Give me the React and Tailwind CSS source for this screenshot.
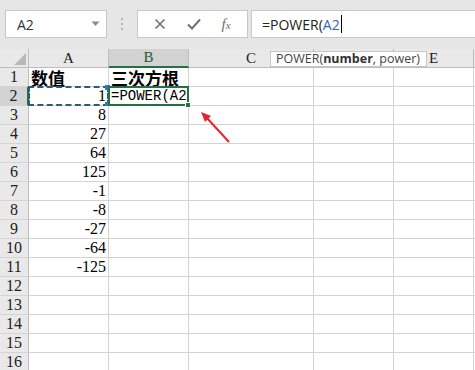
import React from "react";

const cols = [
  { key: "A", w: "w-[80px]" },
  { key: "B", w: "w-[80px]" },
  { key: "C", w: "w-[125px]" },
  { key: "D", w: "w-[80px]" },
  { key: "E", w: "w-[80px]" },
  { key: "F", w: "w-[20px]" },
];

const values = ["数值", "1", "8", "27", "64", "125", "-1", "-8", "-27", "-64", "-125"];

const serif = { fontFamily: '"Liberation Serif", "Noto Sans CJK SC", serif' };

function Toolbar() {
  return (
    <div className="h-[49px] flex items-start pt-[10px] pl-[5px] bg-[#e6e6e6]">
      {/* name box */}
      <div className="w-[102px] h-[28px] bg-white border border-[#c8c8c8] flex items-center justify-between pl-[11px] pr-[6px]">
        <span className="text-[14px] text-[#333]" style={{ fontFamily: '"Open Sans", "Noto Sans", sans-serif' }}>A2</span>
        <svg width="9" height="6" viewBox="0 0 9 6">
          <path d="M0.5 0.5 L8.5 0.5 L4.5 5 Z" fill="#8a8a8a" />
        </svg>
      </div>
      {/* dots */}
      <div className="w-[30px] h-[28px] flex flex-col items-center justify-center gap-[3px]">
        <div className="w-[2px] h-[2px] bg-[#b5b5b5]" />
        <div className="w-[2px] h-[2px] bg-[#b5b5b5]" />
        <div className="w-[2px] h-[2px] bg-[#b5b5b5]" />
      </div>
      {/* x check fx */}
      <div className="w-[111px] h-[28px] bg-white border border-[#c8c8c8] flex items-center justify-around px-[6px]">
        <svg width="12" height="12" viewBox="0 0 12 12">
          <path d="M1.5 1.5 L10.5 10.5 M10.5 1.5 L1.5 10.5" stroke="#6f6f6f" strokeWidth="1.6" />
        </svg>
        <svg width="14" height="12" viewBox="0 0 14 12">
          <path d="M1 6.5 L5 10.5 L13 1.5" stroke="#6f6f6f" strokeWidth="2" fill="none" />
        </svg>
        <span className="text-[15px] italic text-[#6f6f6f] leading-none" style={{ fontFamily: '"Liberation Serif", serif' }}>
          f<span className="text-[11px]">x</span>
        </span>
      </div>
      {/* formula input */}
      <div className="ml-[3px] flex-1 h-[28px] bg-white border border-[#c8c8c8] border-r-0 flex items-center pl-[10px]">
        <span className="text-[14px] text-[#222]" style={{ fontFamily: '"Open Sans", "Noto Sans", sans-serif' }}>
          =POWER(<span className="text-[#3465b5]">A2</span>
        </span>
        <div className="w-[1px] h-[18px] bg-black ml-[1px]" />
      </div>
    </div>
  );
}

function HeaderRow() {
  return (
    <div className="flex h-[19px]">
      <div className="w-[29px] shrink-0 bg-[#e9e9e9] border-r border-b border-[#bdbdbd] relative">
        <svg className="absolute right-[2px] bottom-[2px]" width="12" height="12" viewBox="0 0 12 12">
          <path d="M12 0 L12 12 L0 12 Z" fill="#b8b8b8" />
        </svg>
      </div>
      {cols.map((c) => {
        const sel = c.key === "B";
        return (
          <div
            key={c.key}
            className={`${c.w} shrink-0 flex items-center justify-center text-[15px] border-r ${
              sel
                ? "bg-[#d3d3d3] border-b-2 border-b-[#217346] border-r-[#bdbdbd] text-[#1e5a36]"
                : "bg-[#e9e9e9] border-b border-[#bdbdbd] text-[#222]"
            }`}
            style={serif}
          >
            {c.key === "D" || c.key === "F" ? "" : c.key}
          </div>
        );
      })}
    </div>
  );
}

function Row({ n }) {
  const sel = n === 2;
  const v = values[n - 1];
  return (
    <div className="flex h-[19px]">
      <div
        className={`w-[29px] shrink-0 flex items-center justify-center text-[16px] border-b border-[#d4d4d4] ${
          sel ? "bg-[#d3d3d3] border-r-2 border-r-[#217346]" : "bg-[#e9e9e9] border-r border-r-[#bdbdbd]"
        } text-[#222]`}
        style={serif}
      >
        {n}
      </div>
      {cols.map((c) => {
        let content = null;
        let extra = "";
        if (c.key === "A" && v !== undefined) {
          if (n === 1) {
            content = (
              <span className="font-bold text-[17px] pl-[2px] text-black" style={{ fontFamily: '"Noto Sans CJK SC", sans-serif' }}>
                {v}
              </span>
            );
            extra = "justify-start";
          } else {
            content = (
              <span className="text-[16px] pr-[2px] text-black" style={serif}>
                {v}
              </span>
            );
            extra = "justify-end";
          }
        }
        if (c.key === "B" && n === 1) {
          content = (
            <span className="font-bold text-[17px] pl-[2px] text-black whitespace-nowrap" style={{ fontFamily: '"Noto Sans CJK SC", sans-serif' }}>
              三次方根
            </span>
          );
        }
        return (
          <div
            key={c.key}
            className={`${c.w} shrink-0 relative flex items-center border-r border-b border-[#d4d4d4] bg-white leading-none ${extra} ${
              sel && c.key === "A" ? "bg-[#dde7f2]" : ""
            }`}
          >
            {content}
            {sel && c.key === "A" && (
              <div className="absolute -left-[1px] -top-[1px] -right-[1px] -bottom-[1px] border-2 border-dashed border-[#2a5f73]">
                <div className="absolute -right-[3px] -top-[3px] w-[5px] h-[5px] bg-[#3a72c4]" />
                <div className="absolute -right-[3px] -bottom-[3px] w-[5px] h-[5px] bg-[#3a72c4]" />
              </div>
            )}
            {sel && c.key === "B" && (
              <div className="absolute -left-[1px] -top-[1px] -right-[1px] -bottom-[1px] border-2 border-[#217346] flex items-center pl-[1px] z-10">
                <span className="text-[14px] text-black whitespace-nowrap" style={{ fontFamily: '"Liberation Mono", monospace' }}>
                  =POWER(A2
                </span>
                <div className="absolute -right-[4px] -bottom-[4px] w-[6px] h-[6px] bg-[#217346] border border-white" />
              </div>
            )}
          </div>
        );
      })}
    </div>
  );
}

export default function App() {
  return (
    <div className="relative w-[475px] h-[370px] overflow-hidden bg-white">
      <Toolbar />
      <HeaderRow />
      {Array.from({ length: 16 }, (_, i) => (
        <Row key={i} n={i + 1} />
      ))}

      {/* function tooltip */}
      <div
        className="absolute left-[270px] top-[51px] w-[157px] h-[16px] bg-white border border-[#c6c6c6] flex items-center pl-[5px] text-[12.5px] text-[#444] z-20 leading-none"
        style={{ fontFamily: '"Open Sans", "Noto Sans", sans-serif' }}
      >
        POWER(<span className="font-bold text-[#333]">number</span>, power)
      </div>

      {/* red arrow annotation */}
      <svg className="absolute left-[195px] top-[106px] z-20" width="40" height="40" viewBox="0 0 40 40">
        <path d="M34 36 L11 11" stroke="#e3242b" strokeWidth="2" />
        <path d="M6 6 L16 10 L10 16 Z" fill="#e3242b" />
      </svg>
    </div>
  );
}
